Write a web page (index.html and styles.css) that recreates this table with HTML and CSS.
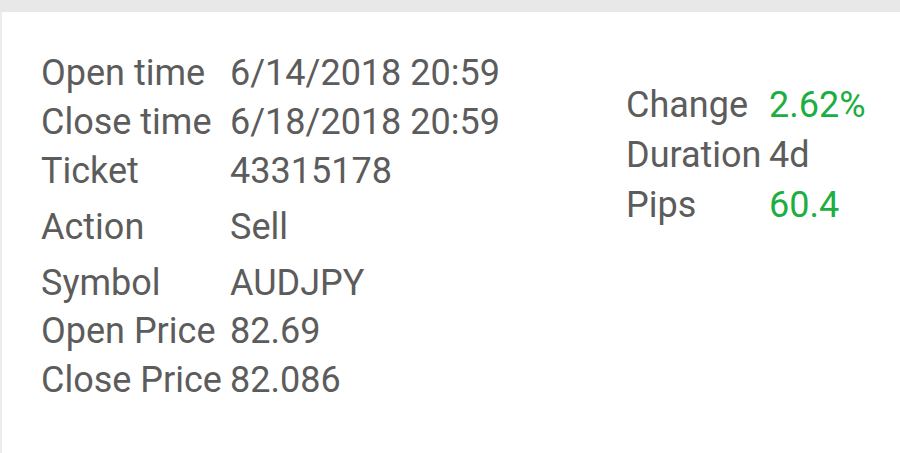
FILE: index.html
```html
<!DOCTYPE html>
<html>
<head>
<meta charset="utf-8">
<link rel="stylesheet" href="styles.css">
</head>
<body>
<div class="topbar"></div>
<div class="card">
  <div class="details left">
    <div class="row r1"><span class="label">Open time</span><span class="value">6/14/2018 20:59</span></div>
    <div class="row r2"><span class="label">Close time</span><span class="value">6/18/2018 20:59</span></div>
    <div class="row r3"><span class="label">Ticket</span><span class="value">43315178</span></div>
    <div class="row r4"><span class="label">Action</span><span class="value">Sell</span></div>
    <div class="row r5"><span class="label">Symbol</span><span class="value">AUDJPY</span></div>
    <div class="row r6"><span class="label">Open Price</span><span class="value">82.69</span></div>
    <div class="row r7"><span class="label">Close Price</span><span class="value">82.086</span></div>
  </div>
  <div class="details right">
    <div class="row"><span class="label">Change</span><span class="value green">2.62%</span></div>
    <div class="row"><span class="label">Duration</span><span class="value">4d</span></div>
    <div class="row"><span class="label">Pips</span><span class="value green">60.4</span></div>
  </div>
</div>
</body>
</html>
```
FILE: styles.css
```css
html, body {
  margin: 0;
  padding: 0;
  background: #ffffff;
}
body {
  width: 900px;
  height: 453px;
  overflow: hidden;
  font-family: Roboto, "Noto Sans", sans-serif;
  color: #5c5c5c;
}
.topbar {
  height: 12px;
  background: #e8e8e8;
}
.card {
  display: flex;
  border-left: 2px solid #ececec;
  height: 441px;
  box-sizing: border-box;
  padding-left: 39px;
}
.details {
  display: flex;
  flex-direction: column;
  font-size: 36px;
  line-height: 48px;
}
.left {
  padding-top: 37px;
  width: 585px;
}
.left .label {
  width: 189px;
}
.right {
  padding-top: 69px;
}
.right .row {
  height: 50px;
}
.right .label {
  width: 143px;
}
.row {
  display: flex;
  white-space: nowrap;
}
.label {
  display: inline-block;
  flex: none;
}
.green {
  color: #1cae42;
}
.r1 { height: 49px; }
.r2 { height: 49px; }
.r3 { height: 56px; }
.r4 { height: 56px; }
.r5 { height: 48px; }
.r6 { height: 49px; }
.r7 { height: 48px; }
```
